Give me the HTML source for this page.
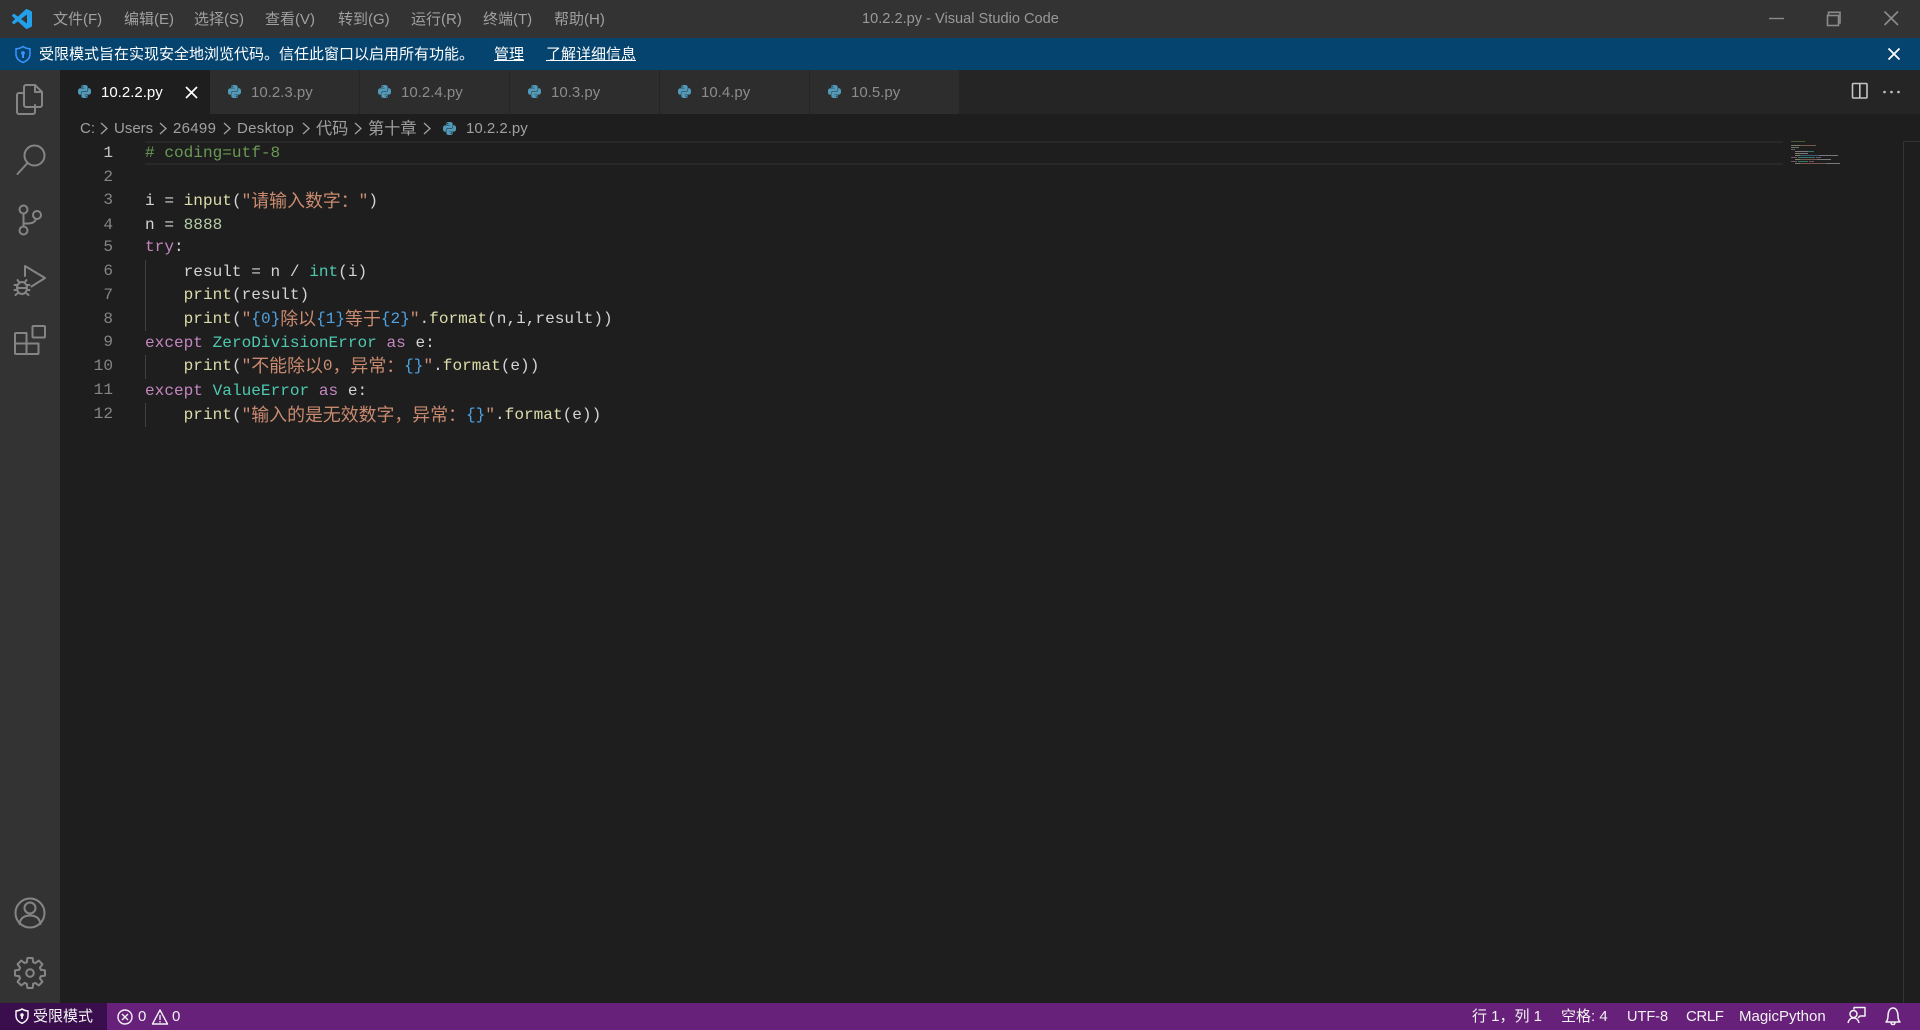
<!DOCTYPE html>
<html lang="zh-CN">
<head>
<meta charset="utf-8">
<title>10.2.2.py - Visual Studio Code</title>
<style>
html,body{margin:0;padding:0;width:1920px;height:1030px;overflow:hidden;background:#1e1e1e}
body{position:relative;font-family:"Liberation Sans","Noto Sans CJK SC",sans-serif;font-size:15px;color:#ccc}
.b{position:absolute}
.t{position:absolute;white-space:nowrap}
#menu .t{top:9px;line-height:22px;color:#a0a0a0;font-size:15px}
.tab{position:absolute;top:70px;width:149px;height:44px;background:#2d2d2d;border-right:1px solid #252526}
.tab span{position:absolute;left:41px;top:12px;line-height:22px;color:#8c8c8c;font-size:15px}
.tab svg{position:absolute;left:18px;top:15px}
.crumb{position:absolute;top:118px;line-height:22px;color:#a0a0a0;font-size:15px;white-space:nowrap}
.crumb.z{font-size:16.200px}
.ln{position:absolute;left:70px;width:43px;text-align:right;font-family:"Liberation Mono",monospace;font-size:16.1px;line-height:24px;color:#858585}
.cl{position:absolute;left:145px;font-family:"Liberation Mono","Noto Sans CJK SC",monospace;font-size:16.1px;line-height:24px;white-space:pre;color:#d4d4d4}
.cl i{font-style:normal;font-family:"Noto Sans CJK SC",sans-serif;font-size:17.9px;line-height:0;color:#c98a70;position:relative;top:1.500px}
.k{color:#c586c0}.f{color:#dcdcaa}.s{color:#ce9178}.o{color:#4fa3e3}.n{color:#b5cea8}.g{color:#6a9955}.c{color:#4ec9b0}
.ig{position:absolute;left:145px;width:1px;background:#404040}
.st{position:absolute;top:1006px;line-height:22px;color:#f2f2f2;font-size:15px;white-space:nowrap}
</style>
</head>
<body>
<svg width="0" height="0" style="position:absolute">
<defs>
<symbol id="py" viewBox="0 0 24 24"><path fill="#519aba" d="M14.25.18l.9.2.73.26.59.3.45.32.34.34.25.34.16.33.1.3.04.26.02.2-.01.13V8.5l-.05.63-.13.55-.21.46-.26.38-.3.31-.33.25-.35.19-.35.14-.33.1-.3.07-.26.04-.21.02H8.77l-.69.05-.59.14-.5.22-.41.27-.33.32-.27.35-.2.36-.15.37-.1.35-.07.32-.04.27-.02.21v3.06H3.17l-.21-.03-.28-.07-.32-.12-.35-.18-.36-.26-.36-.36-.35-.46-.32-.59-.28-.73-.21-.88-.14-1.05-.05-1.23.06-1.22.16-1.04.24-.87.32-.71.36-.57.4-.44.42-.33.42-.24.4-.16.36-.1.32-.05.24-.01h.16l.06.01h8.16v-.83H6.18l-.01-2.75-.02-.37.05-.34.11-.31.17-.28.25-.26.31-.23.38-.2.44-.18.51-.15.58-.12.64-.1.71-.06.77-.04.84-.02 1.27.05zm-6.3 1.98l-.23.33-.08.41.08.41.23.34.33.22.41.09.41-.09.33-.22.23-.34.08-.41-.08-.41-.23-.33-.33-.22-.41-.09-.41.09zm13.09 3.95l.28.06.32.12.35.18.36.27.36.35.35.47.32.59.28.73.21.88.14 1.04.05 1.23-.06 1.23-.16 1.04-.24.86-.32.71-.36.57-.4.45-.42.33-.42.24-.4.16-.36.09-.32.05-.24.02-.16-.01h-8.22v.82h5.84l.01 2.76.02.36-.05.34-.11.31-.17.29-.25.25-.31.24-.38.2-.44.17-.51.15-.58.13-.64.09-.71.07-.77.04-.84.01-1.27-.04-1.07-.14-.9-.2-.73-.25-.59-.3-.45-.33-.34-.34-.25-.34-.16-.33-.1-.3-.04-.25-.02-.2.01-.13v-5.34l.05-.64.13-.54.21-.46.26-.38.3-.32.33-.24.35-.2.35-.14.33-.1.3-.06.26-.04.21-.02.13-.01h5.84l.69-.05.59-.14.5-.21.41-.28.33-.32.27-.35.2-.36.15-.36.1-.35.07-.32.04-.28.02-.21V6.07h2.09l.14.01zm-6.47 14.25l-.23.33-.08.41.08.41.23.33.33.23.41.08.41-.08.33-.23.23-.33.08-.41-.08-.41-.23-.33-.33-.23-.41-.08-.41.08z"/></symbol>
</defs>
</svg>

<!-- title bar -->
<div class="b" style="left:0;top:0;width:1920px;height:38px;background:#333333"></div>
<svg class="b" style="left:12px;top:9px" width="20" height="20" viewBox="0 0 24 24"><path fill="#23a0ea" d="M23.15 2.587L18.21.21a1.494 1.494 0 0 0-1.705.29l-9.46 8.63-4.12-3.128a.999.999 0 0 0-1.276.057L.327 7.261A1 1 0 0 0 .326 8.74L3.899 12 .326 15.26a1 1 0 0 0 .001 1.479L1.65 17.94a.999.999 0 0 0 1.276.057l4.12-3.128 9.46 8.63a1.492 1.492 0 0 0 1.704.29l4.942-2.377A1.5 1.5 0 0 0 24 20.06V3.939a1.5 1.5 0 0 0-.85-1.352zm-5.146 14.861L10.826 12l7.178-5.448v10.896z"/></svg>
<div id="menu">
<div class="t" style="left:53px">文件(F)</div>
<div class="t" style="left:124px">编辑(E)</div>
<div class="t" style="left:194px">选择(S)</div>
<div class="t" style="left:265px">查看(V)</div>
<div class="t" style="left:338px">转到(G)</div>
<div class="t" style="left:411px">运行(R)</div>
<div class="t" style="left:483px">终端(T)</div>
<div class="t" style="left:554px">帮助(H)</div>
</div>
<div class="t" style="left:862px;top:8px;line-height:22px;color:#999;font-size:14.6px">10.2.2.py - Visual Studio Code</div>
<svg class="b" style="left:1760px;top:0" width="160" height="38" fill="none" stroke="#8a8a8a">
<path stroke-width="1.4" d="M9 18.500h15"/>
<path stroke-width="1.6" d="M68.500 15v-2.700h11.500V23H77"/>
<rect x="67.500" y="15.500" width="11" height="10" stroke-width="1.6" fill="#333333"/>
<path stroke-width="1.7" d="M124.500 11.500l13.500 13.500M138 11.500L124.500 25"/>
</svg>

<!-- banner -->
<div class="b" style="left:0;top:38px;width:1920px;height:32px;background:#064470"></div>
<svg class="b" style="left:14px;top:45px" width="18" height="19" viewBox="0 0 18 19" fill="none"><path d="M9 1.500c2 1.500 4 2.200 7 2.300v5.500c0 4-3 6.700-7 8.200-4-1.500-7-4.200-7-8.200V3.800c3-.1 5-.8 7-2.300z" stroke="#3794ff" stroke-width="1.500"/><circle cx="9" cy="8" r="1.900" fill="#3794ff"/><rect x="8" y="9" width="2" height="4" fill="#3794ff"/></svg>
<div class="t" style="left:39px;top:44px;line-height:22px;color:#fff;font-size:15px">受限模式旨在实现安全地浏览代码。信任此窗口以启用所有功能。</div>
<div class="t" style="left:494px;top:44px;line-height:22px;color:#fff;font-size:15px;text-decoration:underline">管理</div>
<div class="t" style="left:546px;top:44px;line-height:22px;color:#fff;font-size:15px;text-decoration:underline">了解详细信息</div>
<svg class="b" style="left:1886px;top:46px" width="16" height="16" fill="none" stroke="#fff" stroke-width="1.8"><path d="M2.500 2.500l11 11M13.500 2.500l-11 11"/></svg>

<!-- activity bar -->
<div class="b" style="left:0;top:70px;width:60px;height:933px;background:#333333"></div>
<svg class="b" style="left:0;top:0" width="60" height="1003" fill="none" stroke="#858585" stroke-width="2" stroke-linejoin="round" stroke-linecap="round">
<path d="M24 87a2 2 0 0 1 2-2h9l7 7v13a2 2 0 0 1-2 2H26a2 2 0 0 1-2-2z"/>
<path d="M35 85v7h7"/>
<path d="M24 93h-5a2 2 0 0 0-2 2v17a2 2 0 0 0 2 2h14a2 2 0 0 0 2-2v-7"/>
<circle cx="34.500" cy="155.500" r="10"/>
<path d="M27.500 163L17.500 174"/>
<circle cx="23.500" cy="209.500" r="4"/>
<circle cx="23.500" cy="230.500" r="4"/>
<circle cx="37" cy="215" r="4"/>
<path d="M23.500 213.500v13M36 219c-1 3.500-4 4.500-8 4.500h-4.500"/>
<path d="M25 276v-10l20 12-13.500 8.500"/>
<ellipse cx="22" cy="288" rx="5" ry="6"/>
<path d="M19 282l-1.500-2M25 282l1.500-2M17 285h-2.500M27 285h2.500M17 290h-2.500M27 290h2.500M18 293l-2.500 2M26 293l2.500 2M18 288h8"/>
<rect x="32.500" y="326" width="12.500" height="11.500" rx="1"/>
<path d="M16 333h10.500v21H16a1 1 0 0 1-1-1v-19a1 1 0 0 1 1-1zM15 343.500h23.500V353a1 1 0 0 1-1 1H16a1 1 0 0 1-1-1z"/>
<circle cx="30" cy="913" r="14.500"/>
<circle cx="30" cy="908" r="5.500"/>
<path d="M19.500 924c1-6.500 5.500-8.500 10.500-8.500s9.500 2 10.500 8.500"/>
<g transform="translate(30 973)">
<circle r="3.800"/>
<path d="M-3.200-10.800L-2.600-15H2.600L3.200-10.800L5.370-9.900"/>
<path transform="rotate(45)" d="M-3.200-10.800L-2.600-15H2.600L3.200-10.800L5.370-9.900"/>
<path transform="rotate(90)" d="M-3.200-10.800L-2.600-15H2.600L3.200-10.800L5.370-9.900"/>
<path transform="rotate(135)" d="M-3.200-10.800L-2.600-15H2.600L3.200-10.800L5.370-9.900"/>
<path transform="rotate(180)" d="M-3.200-10.800L-2.600-15H2.600L3.200-10.800L5.370-9.900"/>
<path transform="rotate(225)" d="M-3.200-10.800L-2.600-15H2.600L3.200-10.800L5.370-9.900"/>
<path transform="rotate(270)" d="M-3.200-10.800L-2.600-15H2.600L3.200-10.800L5.370-9.900"/>
<path transform="rotate(315)" d="M-3.200-10.800L-2.600-15H2.600L3.200-10.800L5.370-9.900"/>
</g>
</svg>

<!-- tabs -->
<div class="b" style="left:60px;top:70px;width:1860px;height:44px;background:#252526"></div>
<div class="tab" style="left:60px;width:150px;border-right:0;background:#1e1e1e"><svg width="13" height="13"><use href="#py"/></svg><span style="color:#fff">10.2.2.py</span></div>
<div class="tab" style="left:210px"><svg width="13" height="13"><use href="#py"/></svg><span>10.2.3.py</span></div>
<div class="tab" style="left:360px"><svg width="13" height="13"><use href="#py"/></svg><span>10.2.4.py</span></div>
<div class="tab" style="left:510px"><svg width="13" height="13"><use href="#py"/></svg><span>10.3.py</span></div>
<div class="tab" style="left:660px"><svg width="13" height="13"><use href="#py"/></svg><span>10.4.py</span></div>
<div class="tab" style="left:810px"><svg width="13" height="13"><use href="#py"/></svg><span>10.5.py</span></div>
<svg class="b" style="left:184px;top:85px" width="15" height="15" fill="none" stroke="#fff" stroke-width="1.700"><path d="M2 2l11 11M13 2L2 13"/></svg>
<svg class="b" style="left:1850px;top:80px" width="54" height="24" fill="none">
<rect x="2.500" y="3.500" width="14.500" height="14.500" rx="1" stroke="#c5c5c5" stroke-width="1.600"/><path d="M9.800 3.500v14.500" stroke="#c5c5c5" stroke-width="1.600"/>
<circle cx="34.500" cy="12" r="1.300" fill="#c5c5c5"/><circle cx="41.500" cy="12" r="1.300" fill="#c5c5c5"/><circle cx="48.500" cy="12" r="1.300" fill="#c5c5c5"/>
</svg>

<!-- breadcrumb -->
<div class="crumb" style="left:80px">C:</div>
<div class="crumb" style="left:114px">Users</div>
<div class="crumb" style="left:173px;letter-spacing:.3px">26499</div>
<div class="crumb" style="left:237px;letter-spacing:.3px">Desktop</div>
<div class="crumb z" style="left:316px">代码</div>
<div class="crumb z" style="left:368px">第十章</div>
<div class="crumb" style="left:466px">10.2.2.py</div>
<svg class="b" style="left:0;top:114px" width="440" height="28" fill="none" stroke="#a0a0a0" stroke-width="1.300"><path d="M101 9l6 5.500-6 5.500M160 9l6 5.500-6 5.500M224 9l6 5.500-6 5.500M303 9l6 5.500-6 5.500M355 9l6 5.500-6 5.500M424 9l6 5.500-6 5.500"/></svg>
<svg class="b" style="left:443px;top:122px" width="13" height="13"><use href="#py"/></svg>

<!-- editor -->
<div class="b" style="left:145px;top:141px;width:1638px;height:20px;border-top:2px solid #282828;border-bottom:2px solid #282828"></div>
<div class="b" style="left:1903px;top:141px;width:1px;height:862px;background:#333"></div>
<div class="b" style="left:1903px;top:141px;width:17px;height:1px;background:#333"></div>

<div class="ig" style="top:260px;height:71px"></div>
<div class="ig" style="top:355px;height:24px"></div>
<div class="ig" style="top:403px;height:24px"></div>

<div class="ln" style="top:141px;color:#c6c6c6">1</div>
<div class="ln" style="top:165px">2</div>
<div class="ln" style="top:188px">3</div>
<div class="ln" style="top:213px">4</div>
<div class="ln" style="top:235px">5</div>
<div class="ln" style="top:259px">6</div>
<div class="ln" style="top:283px">7</div>
<div class="ln" style="top:307px">8</div>
<div class="ln" style="top:330px">9</div>
<div class="ln" style="top:354px">10</div>
<div class="ln" style="top:378px">11</div>
<div class="ln" style="top:402px">12</div>

<div class="cl" style="top:141px"><span class="g"># coding=utf-8</span></div>
<div class="cl" style="top:189px">i = <span class="f">input</span>(<span class="s">"</span><i>请输入数字：</i><span class="s">"</span>)</div>
<div class="cl" style="top:213px">n = <span class="n">8888</span></div>
<div class="cl" style="top:235px"><span class="k">try</span>:</div>
<div class="cl" style="top:260px">    result = n / <span class="c">int</span>(i)</div>
<div class="cl" style="top:283px">    <span class="f">print</span>(result)</div>
<div class="cl" style="top:307px">    <span class="f">print</span>(<span class="s">"</span><span class="o">{0}</span><i>除以</i><span class="o">{1}</span><i>等于</i><span class="o">{2}</span><span class="s">"</span>.<span class="f">format</span>(n,i,result))</div>
<div class="cl" style="top:331px"><span class="k">except</span> <span class="c">ZeroDivisionError</span> <span class="k">as</span> e:</div>
<div class="cl" style="top:354px">    <span class="f">print</span>(<span class="s">"</span><i>不能除以</i><span class="s">0</span><i>，异常：</i><span class="o">{}</span><span class="s">"</span>.<span class="f">format</span>(e))</div>
<div class="cl" style="top:379px"><span class="k">except</span> <span class="c">ValueError</span> <span class="k">as</span> e:</div>
<div class="cl" style="top:403px">    <span class="f">print</span>(<span class="s">"</span><i>输入的是无效数字，异常：</i><span class="o">{}</span><span class="s">"</span>.<span class="f">format</span>(e))</div>

<!-- minimap -->
<svg class="b" style="left:1791px;top:140px" width="50" height="26" opacity=".5">
<rect x="0" y="1" width="14" height="1" fill="#6a9955"/>
<rect x="0" y="5" width="4" height="1" fill="#d4d4d4"/><rect x="4" y="5" width="5" height="1" fill="#dcdcaa"/><rect x="9" y="5" width="16" height="1" fill="#ce9178"/>
<rect x="0" y="7" width="8" height="1" fill="#b5cea8"/>
<rect x="0" y="9" width="4" height="1" fill="#c586c0"/>
<rect x="4" y="11" width="13" height="1" fill="#d4d4d4"/><rect x="17" y="11" width="6" height="1" fill="#4ec9b0"/>
<rect x="4" y="13" width="5" height="1" fill="#dcdcaa"/><rect x="9" y="13" width="8" height="1" fill="#d4d4d4"/>
<rect x="4" y="15" width="5" height="1" fill="#dcdcaa"/><rect x="9" y="15" width="19" height="1" fill="#569cd6"/><rect x="28" y="15" width="19" height="1" fill="#d4d4d4"/>
<rect x="0" y="17" width="6" height="1" fill="#c586c0"/><rect x="7" y="17" width="17" height="1" fill="#4ec9b0"/><rect x="25" y="17" width="5" height="1" fill="#c586c0"/>
<rect x="4" y="19" width="5" height="1" fill="#dcdcaa"/><rect x="9" y="19" width="17" height="1" fill="#ce9178"/><rect x="26" y="19" width="14" height="1" fill="#d4d4d4"/>
<rect x="0" y="21" width="6" height="1" fill="#c586c0"/><rect x="7" y="21" width="10" height="1" fill="#4ec9b0"/><rect x="18" y="21" width="5" height="1" fill="#c586c0"/>
<rect x="4" y="23" width="5" height="1" fill="#dcdcaa"/><rect x="9" y="23" width="26" height="1" fill="#ce9178"/><rect x="35" y="23" width="14" height="1" fill="#d4d4d4"/>
</svg>

<!-- status bar -->
<div class="b" style="left:0;top:1003px;width:1920px;height:27px;background:#68217a"></div>
<div class="b" style="left:0;top:1003px;width:107px;height:27px;background:#3a0e4c"></div>
<svg class="b" style="left:15px;top:1008px" width="14" height="17" viewBox="0 0 14 17" fill="none"><path d="M7 1c1.800 1.200 3.500 1.900 6 2v5c0 3.500-2.500 5.800-6 7.300C3.500 13.800 1 11.500 1 8V3c2.500-.1 4.200-.8 6-2z" stroke="#fff" stroke-width="1.400"/><circle cx="7" cy="7" r="1.700" fill="#fff"/><rect x="6.200" y="7.500" width="1.600" height="3.500" fill="#fff"/></svg>
<div class="st" style="left:33px">受限模式</div>
<svg class="b" style="left:116px;top:1008px" width="60" height="18" fill="none" stroke="#f2f2f2" stroke-width="1.400"><circle cx="9" cy="9" r="7"/><path d="M6 6l6 6M12 6l-6 6"/><path d="M44 2l7.500 14h-15z" stroke-linejoin="round"/><path d="M44 7v5M44 13v1.500"/></svg>
<div class="st" style="left:138px">0</div>
<div class="st" style="left:172px">0</div>
<div class="st" style="left:1472px">行 1，列 1</div>
<div class="st" style="left:1561px">空格: 4</div>
<div class="st" style="left:1627px;font-size:14.5px">UTF-8</div>
<div class="st" style="left:1686px;letter-spacing:-.4px">CRLF</div>
<div class="st" style="left:1739px">MagicPython</div>
<svg class="b" style="left:1846px;top:1006px" width="58" height="20" fill="none" stroke="#f2f2f2" stroke-width="1.500" stroke-linejoin="round">
<path d="M8 3.500V1.500h11v8.500h-5l-2 2"/>
<circle cx="7.500" cy="8" r="3.500"/>
<path d="M2 17c.5-3 2.500-5 5.500-5s5 2 5.500 5"/>
<path d="M40 16h14c-1.500-1.500-2-3-2-6 0-4-1.500-8-5-8s-5 4-5 8c0 3-.5 4.500-2 6zM45 16.500c0 1.500 1 2 2 2s2-.5 2-2"/>
</svg>
</body>
</html>
